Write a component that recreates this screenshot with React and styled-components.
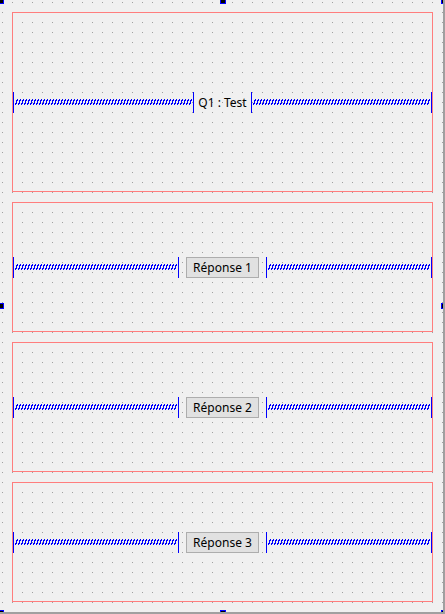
import React, { useId } from "react";
import styled, { createGlobalStyle } from "styled-components";

const Global = createGlobalStyle`
  html, body { margin: 0; padding: 0; background: #f0f0f0; }
  body { font-family: "Noto Sans", "Liberation Sans", sans-serif; }
`;

const Form = styled.div`
  position: relative;
  border-right: 2px solid #a0a0a0;
  border-bottom: 2px solid #a0a0a0;
  background-color: #a0a0a0;
  background-image:
    linear-gradient(to bottom, #f0f0f0 0 2px, transparent 2px 3px, #f0f0f0 3px 10px),
    linear-gradient(to right, #f0f0f0 0 2px, transparent 2px 3px, #f0f0f0 3px 10px);
  background-size: 10px 10px;
  padding: 12px 0 0 12px;
  box-sizing: border-box;
  width: 445px;
  height: 614px;
  display: flex;
  flex-direction: column;
  gap: 10px;
  overflow: hidden;
`;

const Frame = styled.div`
  box-sizing: border-box;
  width: 421px;
  height: ${(p) => p.$h}px;
  flex: none;
  border: 1px solid #ff7d7d;
  display: flex;
  align-items: center;
`;

const SpringBox = styled.div`
  flex: 1 1 0;
  height: 21px;
  display: flex;
  align-items: stretch;
  border-left: 1px solid #0000ff;
  border-right: 1px solid #0000ff;
  box-sizing: border-box;
  padding: 7px 1px 0 1px;
`;

const SpringSvg = styled.svg`
  display: block;
  width: 100%;
  height: 6px;
`;

const Label = styled.div`
  width: ${(p) => p.$w}px;
  flex: none;
  text-align: center;
  font-size: 12px;
  color: #000;
  line-height: 21px;
  white-space: nowrap;
`;

const Button = styled.div`
  width: 73px;
  height: 21px;
  flex: none;
  box-sizing: border-box;
  margin: 0 7px;
  border: 1px solid #adadad;
  background: #e1e1e1;
  font-size: 12px;
  color: #000;
  display: flex;
  align-items: center;
  justify-content: center;
  white-space: nowrap;
`;

const Handle = styled.div`
  position: absolute;
  left: ${(p) => p.$x}px;
  top: ${(p) => p.$y}px;
  width: 6px;
  height: 6px;
  box-sizing: border-box;
  border: 1px solid #0000ff;
  background: #000;
`;

function Spring() {
  const id = useId().replace(/:/g, "");
  return (
    <SpringBox>
      <SpringSvg shapeRendering="crispEdges">
        <defs>
          <pattern id={id} width="3" height="6" patternUnits="userSpaceOnUse">
            <rect x="2" y="0" width="1" height="1" fill="#0000ff" />
            <rect x="1" y="1" width="2" height="1" fill="#0000ff" />
            <rect x="1" y="2" width="1" height="2" fill="#0000ff" />
            <rect x="0" y="4" width="2" height="1" fill="#0000ff" />
            <rect x="0" y="5" width="1" height="1" fill="#0000ff" />
          </pattern>
        </defs>
        <rect x="0" y="0" width="100%" height="6" fill={`url(#${id})`} />
      </SpringSvg>
    </SpringBox>
  );
}

const handles = [
  [-2, -2], [220, -2], [441, -2],
  [-2, 303], [441, 303],
  [-2, 610], [220, 610], [441, 610],
];

export default function App() {
  return (
    <>
      <Global />
      <Form>
        <Frame $h={180}>
          <Spring />
          <Label $w={57}>Q1 : Test</Label>
          <Spring />
        </Frame>
        <Frame $h={130}>
          <Spring />
          <Button>Réponse 1</Button>
          <Spring />
        </Frame>
        <Frame $h={130}>
          <Spring />
          <Button>Réponse 2</Button>
          <Spring />
        </Frame>
        <Frame $h={120}>
          <Spring />
          <Button>Réponse 3</Button>
          <Spring />
        </Frame>
        {handles.map(([x, y], i) => (
          <Handle key={i} $x={x} $y={y} />
        ))}
      </Form>
    </>
  );
}
